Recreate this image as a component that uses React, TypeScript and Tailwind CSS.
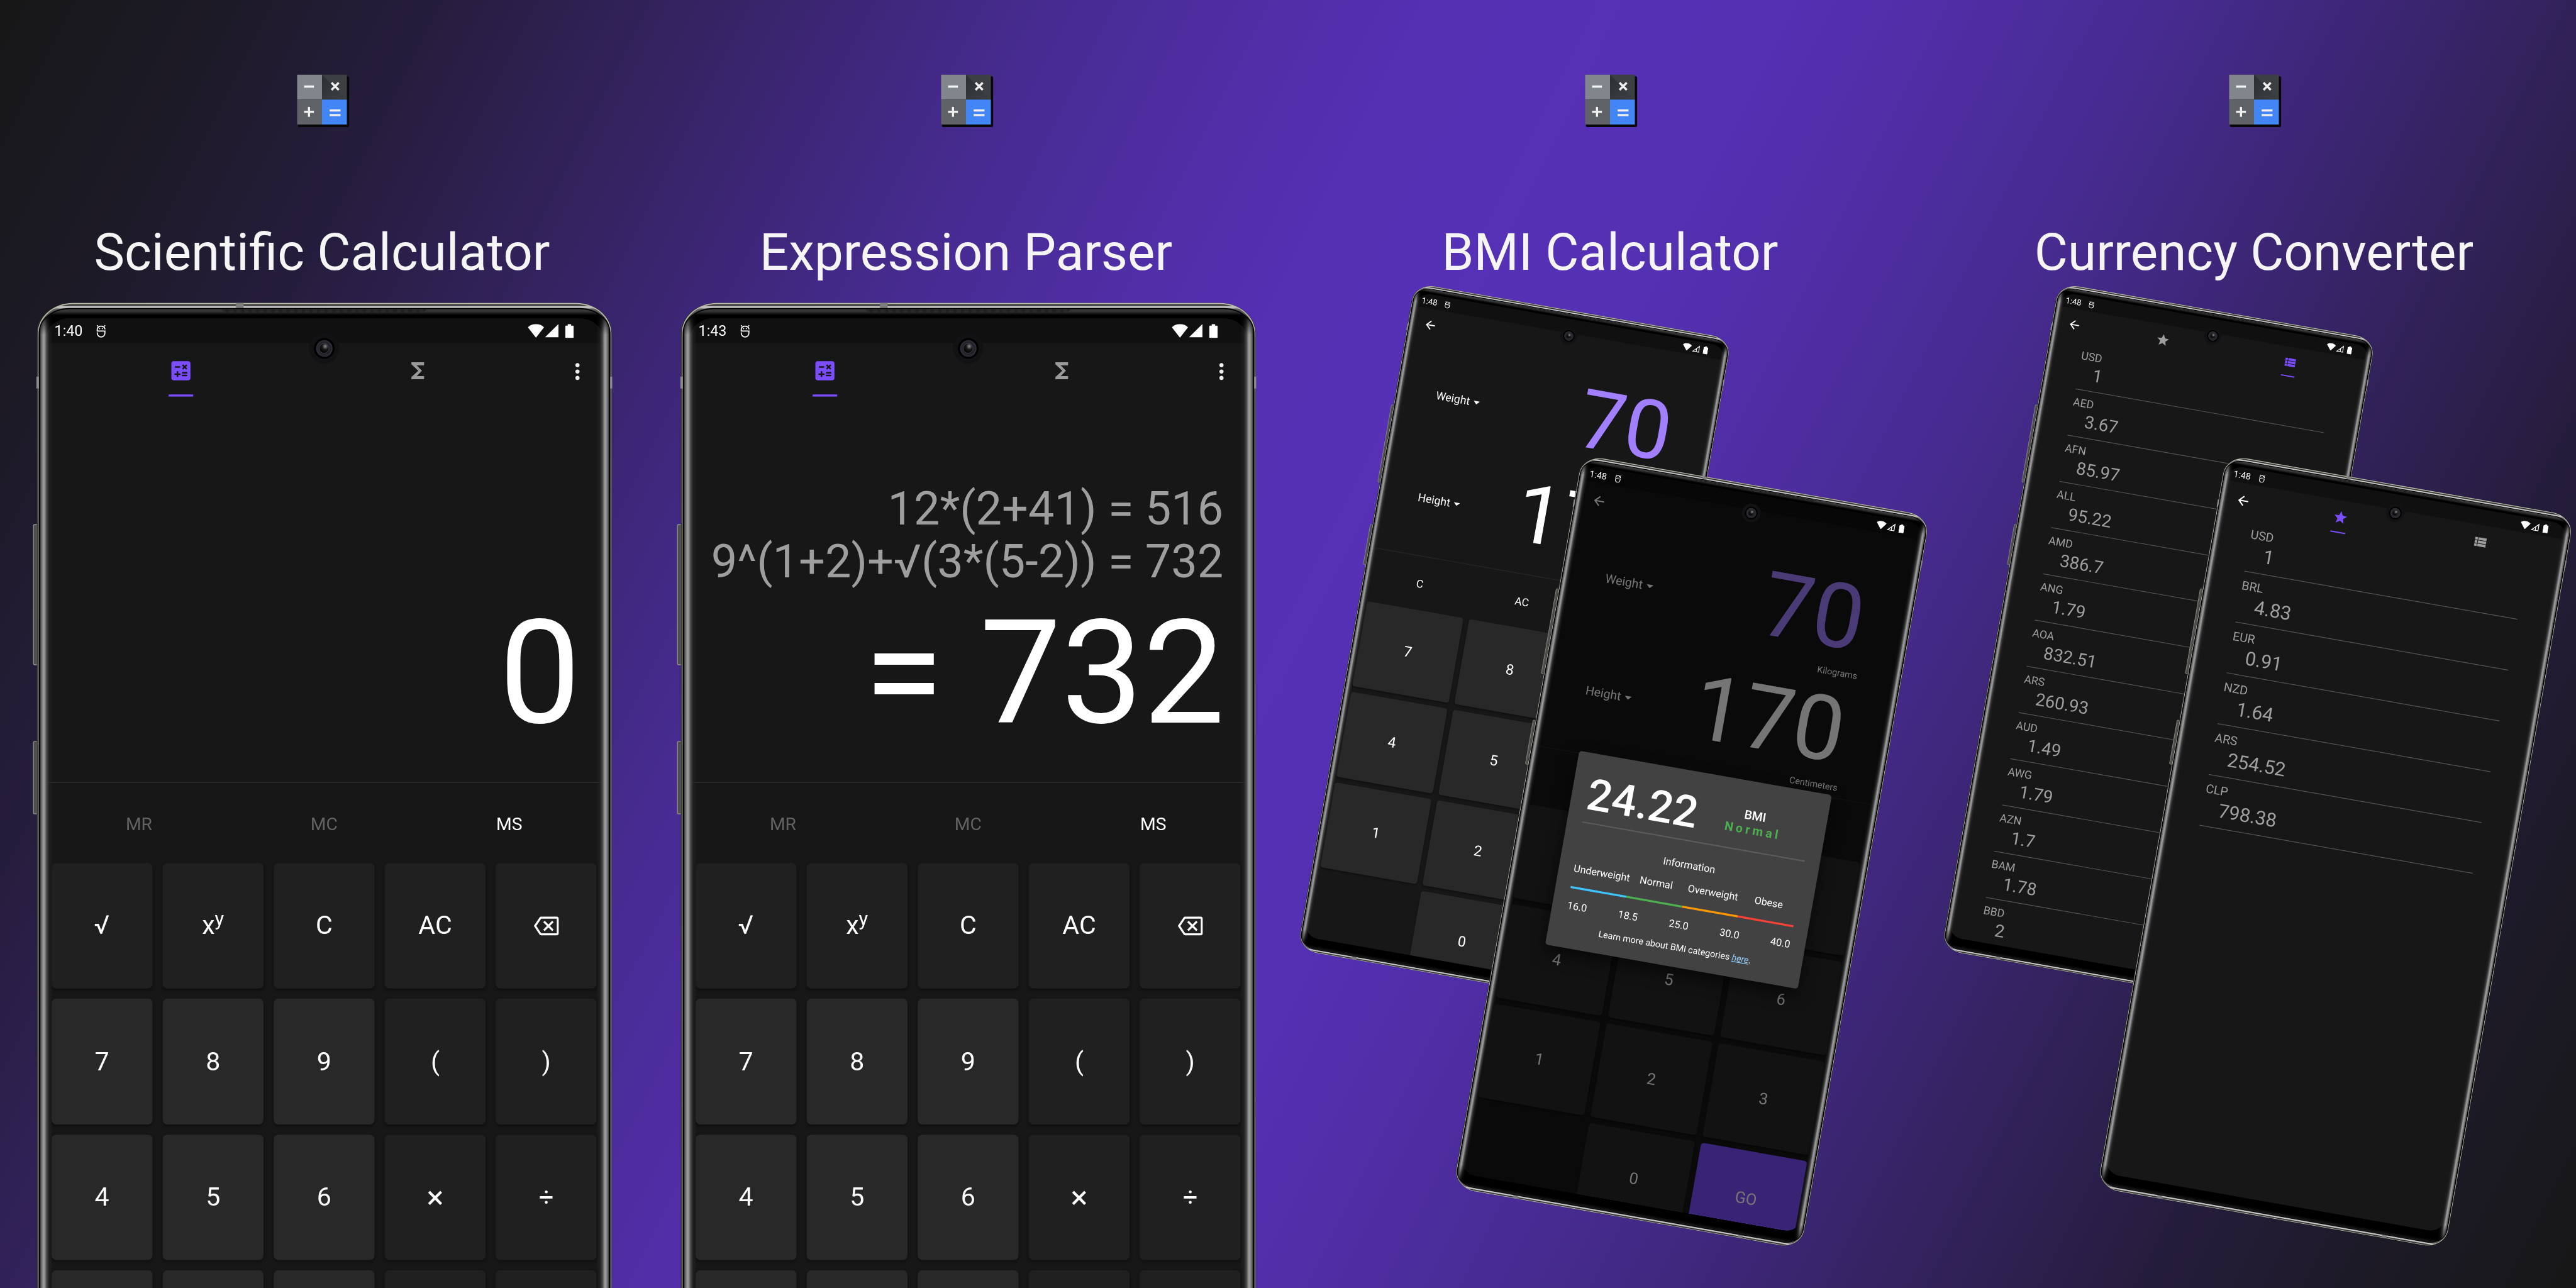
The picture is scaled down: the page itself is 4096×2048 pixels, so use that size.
import type { ReactNode } from 'react';
import {
  MdArrowBack,
  MdArrowDropDown,
  MdCalculate,
  MdFunctions,
  MdMoreVert,
  MdOutlineBackspace,
  MdStar,
  MdViewList,
} from 'react-icons/md';

/* ---------- App logo ---------- */

function Logo() {
  return (
    <div className="relative h-[118px] w-[118px]">
      <div className="absolute left-[2px] top-[4px] h-[120px] w-[121px] rounded-[4px] bg-[#080808]" />
      <svg viewBox="0 0 118 118" className="relative h-[118px] w-[118px]">
        <defs>
          <linearGradient id="fold" x1="0" y1="0" x2="1" y2="1">
            <stop offset="0" stopColor="#2c3032" />
            <stop offset="1" stopColor="#3c4043" />
          </linearGradient>
        </defs>
        <rect width="59" height="59" fill="#80868b" />
        <rect x="59" width="59" height="59" fill="#3c4043" />
        <path d="M59 0L118 59H59Z" fill="#3c4043" />
        <path d="M59 0L118 59H59Z" fill="url(#fold)" />
        <rect y="59" width="59" height="59" fill="#5f6368" />
        <rect x="59" y="59" width="59" height="59" fill="#4285f4" />
        <g fill="#f1f1f1">
          <rect x="16.7" y="25.7" width="23.3" height="5.3" />
          <rect x="16.7" y="85.5" width="23.3" height="5" />
          <rect x="25.8" y="76.4" width="5" height="23.3" />
          <rect x="77" y="82.2" width="25.7" height="5" />
          <rect x="77" y="93.2" width="25.7" height="5" />
        </g>
        <path d="M81.5 19.2L98.5 36.2M98.5 19.2L81.5 36.2" stroke="#f1f1f1" strokeWidth="5.2" />
      </svg>
    </div>
  );
}

/* ---------- Status bar ---------- */

function MaskIcon() {
  return (
    <svg viewBox="0 0 23 31" className="h-[31px] w-[23px]" fill="none" stroke="#fff" strokeWidth="2.6">
      <path d="M20.6 11.5V10A9.2 8 0 0 0 2.6 10V15.4H20.6V20.5A9 8.8 0 0 1 2.6 20.5V18.6" />
      <path d="M3.6 4.6L2.4 1.4M19.6 4.6L20.8 1.4" strokeWidth="2.4" />
      <circle cx="8" cy="9.6" r="1.5" fill="#fff" stroke="none" />
      <circle cx="14.6" cy="9.6" r="1.5" fill="#fff" stroke="none" />
    </svg>
  );
}

function StatusBar({ time, weakSignal }: { time: string; weakSignal?: boolean }) {
  return (
    <div className="flex h-[59px] shrink-0 items-center bg-[#101010] pl-[19px] pr-[67px] pt-[1px] text-white">
      <span className="relative z-20 w-[98px] text-[34.5px] leading-[58px]">{time}</span>
      <span className="relative z-20">
        <MaskIcon />
      </span>
      <span className="relative z-20 ml-auto flex items-center">
        <svg viewBox="0 0 38 32" className="h-[32px] w-[38px]" fill="#fff">
          <path d="M0 7.5C10-2.5 28-2.5 38 7.5L19 32Z" />
        </svg>
        <svg viewBox="0 0 34 32" className="ml-[2px] h-[32px] w-[34px]">
          {weakSignal ? (
            <path d="M30.5 4.5V29.5H5.5Z M20 14V29" fill="none" stroke="#fff" strokeWidth="3" />
          ) : (
            <path d="M32 0V31H0.500Z" fill="#fff" />
          )}
        </svg>
        <svg viewBox="0 0 20 33" className="ml-[14px] h-[33px] w-[20px]" fill="#fff">
          <path d="M6 0H14V3.500H18Q20 3.500 20 5.500V31Q20 33 18 33H2Q0 33 0 31V5.500Q0 3.500 2 3.500H6Z" />
        </svg>
      </span>
    </div>
  );
}

/* ---------- Device frame ---------- */

function Phone({ children }: { children: ReactNode }) {
  return (
    <div className="relative h-[2855px] w-[1357px]">
      {/* hardware keys */}
      <div className="absolute left-[-9px] top-[522px] h-[333px] w-[11px] rounded-l-[4px] border-2 border-[#8f8f8a] bg-[#4f4f4f]" />
      <div className="absolute left-[-9px] top-[1034px] h-[173px] w-[11px] rounded-l-[4px] border-2 border-[#8f8f8a] bg-[#4f4f4f]" />
      {/* outer rim */}
      <div className="absolute inset-0 rounded-[84px/72px] bg-[#2c2c2a]" />
      <div className="absolute inset-x-[1.5px] inset-y-0 rounded-[83px/72px] bg-[#babaa9]" />
      {/* metal band */}
      <div className="absolute inset-x-[3.5px] inset-y-[2.5px] rounded-[80px/70px] bg-[linear-gradient(180deg,#2a2a2a_0px,#3a3a3a_3px,#d4d4d4_6px,#c0c0c0_8px,#5a5a5a_12px,#4a4a4a_30px,#1a1a1a_55px,#000_80px,#000_2770px,#1a1a1a_2795px,#4a4a4a_2820px,#5a5a5a_2838px,#c0c0c0_2842px,#d4d4d4_2844px,#3a3a3a_2847px,#2a2a2a_2850px)]" />
      {/* antenna breaks */}
      <div className="absolute left-[470px] top-0 h-[13px] w-[18px] bg-[#7d7d7d]" />
      <div className="absolute bottom-0 left-[234px] h-[13px] w-[18px] bg-[#7d7d7d]" />
      <div className="absolute bottom-0 left-[1110px] h-[13px] w-[18px] bg-[#7d7d7d]" />
      <div className="absolute left-[-1px] top-[174px] h-[28px] w-[7px] bg-[#8a8a8a]" />
      <div className="absolute right-[-1px] top-[174px] h-[28px] w-[7px] bg-[#8a8a8a]" />
      {/* glass */}
      <div className="absolute inset-x-[4.5px] inset-y-[12px] rounded-[70px/58px] bg-black" />
      <div className="absolute inset-x-[6.5px] bottom-[14px] top-[15px] overflow-hidden rounded-[68px/54px] bg-[linear-gradient(180deg,#6a6a6a_0px,#3a3a3a_1px,#343434_5px,#000_14px,#000_2812px,#1c1c1c_2826px)]">
        <div className="absolute left-[428px] top-0 h-[8px] w-[486px] bg-[repeating-linear-gradient(90deg,#2b2b2b_0px_10px,#232323_10px_18px)] [clip-path:polygon(0_0,100%_0,98%_100%,2%_100%)]" />
        {/* display */}
        <div className="absolute left-[16px] top-[21px] flex h-[2760px] w-[1311px] flex-col overflow-hidden rounded-[56px/44px] bg-[#171717]">
          {children}
        </div>
        {/* curved edge highlights */}
        <div className="absolute inset-y-0 left-0 z-40 w-[30px] bg-[linear-gradient(90deg,#2c2c2c_0px,#6e6e6e_4px,#9f9f9f_9px,#8a8a8a_12px,rgba(80,80,80,0.9)_16px,rgba(40,40,40,0.6)_22px,rgba(20,20,20,0)_30px)] [mask-image:linear-gradient(180deg,transparent_6px,#000_60px,#000_2750px,transparent_2820px)]" />
        <div className="absolute inset-y-0 right-0 z-40 w-[30px] bg-[linear-gradient(270deg,#2c2c2c_0px,#6e6e6e_4px,#9f9f9f_9px,#8a8a8a_12px,rgba(80,80,80,0.9)_16px,rgba(40,40,40,0.6)_22px,rgba(20,20,20,0)_30px)] [mask-image:linear-gradient(180deg,transparent_6px,#000_60px,#000_2750px,transparent_2820px)]" />
      </div>
      {/* front camera */}
      <div className="absolute left-[642px] top-[71px] z-20 flex h-[72px] w-[72px] items-center justify-center rounded-full bg-[#121214]">
        <div className="flex h-[49px] w-[49px] items-center justify-center rounded-full bg-black">
          <div className="flex h-[39px] w-[39px] items-center justify-center rounded-full bg-[radial-gradient(circle,#1c1a22_40%,#45424f_100%)]">
            <div className="h-[24px] w-[24px] rounded-full border border-[#5a5a5a] bg-[radial-gradient(circle_at_62%_30%,#8d8d8d_0%,#1a1a1a_35%,#000_75%)]" />
          </div>
        </div>
      </div>
    </div>
  );
}

/* ---------- Calculator screen ---------- */

const calcRows: { label: ReactNode; digit?: boolean }[] = [
  { label: '√' },
  {
    label: (
      <span>
        x<span className="align-[20px] text-[46px] leading-none">y</span>
      </span>
    ),
  },
  { label: 'C' },
  { label: 'AC' },
  { label: <MdOutlineBackspace className="h-[59px] w-[59px]" /> },
  { label: '7', digit: true },
  { label: '8', digit: true },
  { label: '9', digit: true },
  { label: '(' },
  { label: ')' },
  { label: '4', digit: true },
  { label: '5', digit: true },
  { label: '6', digit: true },
  { label: <span className="text-[75px]">×</span> },
  { label: '÷' },
  { label: '', digit: true },
  { label: '', digit: true },
  { label: '', digit: true },
  { label: '' },
  { label: '' },
];

function CalculatorScreen({ time, history, result }: { time: string; history: string[]; result: string }) {
  return (
    <>
      <StatusBar time={time} />
      <div className="flex h-[126px] shrink-0 pl-[38px]">
        <div className="relative flex w-[559px] shrink-0 items-center justify-center pt-[4px] text-[#7c4dff]">
          <MdCalculate className="h-[60px] w-[60px]" />
          <div className="absolute bottom-0 left-1/2 h-[5px] w-[58px] -translate-x-1/2 bg-[#7c4dff]" />
        </div>
        <div className="flex w-[559px] shrink-0 items-center justify-center pt-[4px] text-[#9a9a9a]">
          <MdFunctions className="h-[60px] w-[60px]" />
        </div>
        <div className="flex w-[154px] shrink-0 items-center pl-[67px] pt-[7px] text-[#eeeeee]">
          <MdMoreVert className="h-[60px] w-[60px] shrink-0" />
        </div>
      </div>
      <div className="flex h-[912px] shrink-0 flex-col items-end justify-end border-b-[3px] border-[#282828] pb-[56px] pr-[50px]">
        {history.map((line) => (
          <div key={line} className="mr-[3px] whitespace-nowrap text-[109.6px] leading-[124px] text-[#9e9e9e]">
            {line}
          </div>
        ))}
        <div className="whitespace-nowrap text-[343px] leading-[402px] text-white">{result}</div>
      </div>
      <div className="grid h-[189px] shrink-0 grid-cols-3 items-center pt-[3px] text-center text-[42px] text-[#616161]">
        <span>MR</span>
        <span>MC</span>
        <span className="text-white">MS</span>
      </div>
      <div className="grid shrink-0 grid-cols-5 gap-[24px] px-[12px] text-[61px] text-white">
        {calcRows.map((key, i) => (
          <div
            key={i}
            className={
              key.digit
                ? 'flex h-[296.3px] items-center justify-center rounded-[11px] bg-[#282828] shadow-[0_5px_8px_rgba(0,0,0,0.3)]'
                : 'flex h-[296.3px] items-center justify-center rounded-[11px] bg-[#202020] shadow-[0_5px_8px_rgba(0,0,0,0.3)]'
            }
          >
            {key.label}
          </div>
        ))}
      </div>
    </>
  );
}

/* ---------- BMI screen ---------- */

function Measure({ label, value, unit, active }: { label: string; value: string; unit: string; active?: boolean }) {
  return (
    <div className="flex h-[436px] shrink-0 justify-between pl-[148px] pr-[146px] text-white">
      <div className="mt-[170px] flex h-[50px] items-center text-[47px] leading-[50px]">
        {label}
        <MdArrowDropDown className="ml-[-4px] h-[64px] w-[64px]" />
      </div>
      <div className="flex flex-col items-end pt-[33px]">
        <div
          className={
            active
              ? 'mr-[14px] text-[346px] leading-[300px] text-[#a17fff]'
              : 'mr-[14px] text-[346px] leading-[300px] text-white'
          }
        >
          {value}
        </div>
        <div className="mt-[46px] text-[34.5px] leading-[37px]">{unit}</div>
      </div>
    </div>
  );
}

function BmiDialog() {
  return (
    <div className="absolute left-[164px] top-[1084px] z-30 flex h-[755px] w-[984px] flex-col rounded-[11px] bg-[#424242] px-[58px] pt-[59px] text-white shadow-[0_28px_60px_rgba(0,0,0,0.55)]">
      <div className="grid h-[197px] grid-cols-2 items-center text-center">
        <div className="text-[168px] font-medium leading-[197px]">24.22</div>
        <div className="text-[47px] leading-[56px]">
          <div className="font-medium">BMI</div>
          <div className="font-bold tracking-[10.5px] text-[#4caf50]">Normal</div>
        </div>
      </div>
      <div className="mt-[9px] h-[5px] bg-[#5c5c5c]" />
      <div className="mt-[68px] text-center text-[39px] leading-[44px]">Information</div>
      <div className="mt-[44px] grid grid-cols-4 text-center text-[39px] leading-[44px]">
        <span>Underweight</span>
        <span className="pr-[8px]">Normal</span>
        <span>Overweight</span>
        <span>Obese</span>
      </div>
      <div className="mt-[47px] grid h-[8px] grid-cols-4">
        <div className="bg-[#40c4ff]" />
        <div className="bg-[#4caf50]" />
        <div className="bg-[#ff9800]" />
        <div className="bg-[#f44336]" />
      </div>
      <div className="mt-[45px] flex justify-between text-[39px] leading-[44px]">
        <span>16.0</span>
        <span>18.5</span>
        <span>25.0</span>
        <span>30.0</span>
        <span>40.0</span>
      </div>
      <div className="mt-[45px] whitespace-nowrap text-center text-[34.5px] leading-[40px]">
        Learn more about BMI categories <span className="text-[#90caf9] italic underline">here</span>.
      </div>
    </div>
  );
}

const bmiKeys = ['7', '8', '9', '4', '5', '6', '1', '2', '3', '', '0', 'GO'];

function BmiScreen({ dialog }: { dialog?: boolean }) {
  return (
    <>
      <StatusBar time="1:48" weakSignal />
      <div className="flex h-[161px] shrink-0 pl-[43px] pt-[39px] text-white">
        <MdArrowBack className="h-[59px] w-[59px]" />
      </div>
      <Measure label="Weight" value="70" unit="Kilograms" active />
      <Measure label="Height" value="170" unit="Centimeters" />
      <div className="grid h-[228px] shrink-0 grid-cols-3 border-t-[3px] border-[#282828] pt-[88px] text-center text-[46px] leading-[54px] text-white">
        <span>C</span>
        <span>AC</span>
      </div>
      <div className="grid shrink-0 grid-cols-3 gap-[24px] px-[12px] text-[61px] text-white">
        {bmiKeys.map((key, i) => (
          <div
            key={i}
            className={
              key === ''
                ? 'h-[364px]'
                : key === 'GO'
                  ? 'flex h-[364px] items-center justify-center rounded-[11px] bg-[#7c4dff]'
                  : 'flex h-[364px] items-center justify-center rounded-[11px] bg-[#282828] shadow-[0_5px_8px_rgba(0,0,0,0.35)]'
            }
          >
            {key}
          </div>
        ))}
      </div>
      {dialog && <div className="absolute inset-0 z-10 bg-black/54" />}
      {dialog && <BmiDialog />}
    </>
  );
}

/* ---------- Currency screen ---------- */

type Rate = [code: string, value: string];

const allRates: Rate[] = [
  ['USD', '1'],
  ['AED', '3.67'],
  ['AFN', '85.97'],
  ['ALL', '95.22'],
  ['AMD', '386.7'],
  ['ANG', '1.79'],
  ['AOA', '832.51'],
  ['ARS', '260.93'],
  ['AUD', '1.49'],
  ['AWG', '1.79'],
  ['AZN', '1.7'],
  ['BAM', '1.78'],
  ['BBD', '2'],
];

const favouriteRates: Rate[] = [
  ['USD', '1'],
  ['BRL', '4.83'],
  ['EUR', '0.91'],
  ['NZD', '1.64'],
  ['ARS', '254.52'],
  ['CLP', '798.38'],
];

function TabSlot({ active, children }: { active: boolean; children: ReactNode }) {
  return (
    <div
      className={
        active
          ? 'relative flex w-[545px] items-center justify-center pt-[4px] text-[#7c4dff]'
          : 'relative flex w-[545px] items-center justify-center pt-[4px] text-[#9e9e9e]'
      }
    >
      {children}
      {active && <div className="absolute bottom-0 left-1/2 h-[5px] w-[58px] -translate-x-1/2 bg-[#7c4dff]" />}
    </div>
  );
}

function CurrencyScreen({ rates, tab }: { rates: Rate[]; tab: 'favourites' | 'all' }) {
  return (
    <>
      <StatusBar time="1:48" weakSignal />
      <div className="flex h-[126px] shrink-0 items-stretch">
        <div className="flex w-[179px] items-center pl-[43px] pt-[8px] text-white">
          <MdArrowBack className="h-[59px] w-[59px]" />
        </div>
        <TabSlot active={tab === 'favourites'}>
          <MdStar className="h-[59px] w-[59px]" />
        </TabSlot>
        <TabSlot active={tab === 'all'}>
          <MdViewList className="h-[59px] w-[59px]" />
        </TabSlot>
      </div>
      <div className="ml-[124px] mr-[123px] mt-[10px] flex flex-col">
        {rates.map(([code, value]) => (
          <div key={code} className="h-[198px] shrink-0 border-b-[3px] border-[#555555] pt-[28px] text-[#9e9e9e]">
            <div className="text-[47px] leading-[50px]">{code}</div>
            <div className="mt-[11px] pl-[62px] text-[73.5px] leading-[80px]">{value}</div>
          </div>
        ))}
      </div>
    </>
  );
}

/* ---------- Page ---------- */

function Column({ title, children }: { title: string; children: ReactNode }) {
  return (
    <section className="relative flex h-[3040px] w-[1520px] shrink-0 flex-col items-center pt-[176px]">
      <Logo />
      <h2 className="mt-[231px] whitespace-nowrap text-[121.4px] leading-[142px] text-[#f5f5f5]">{title}</h2>
      {children}
    </section>
  );
}

function PhonePair({ back, front }: { back: ReactNode; front: ReactNode }) {
  return (
    <>
      <div className="absolute left-[-144px] top-[93px] rotate-[10deg] scale-[0.5595]">
        <Phone>{back}</Phone>
      </div>
      <div className="absolute left-[273.5px] top-[583px] rotate-[10deg] scale-[0.615]">
        <Phone>{front}</Phone>
      </div>
    </>
  );
}

export default function App() {
  return (
    <div className="h-[2048px] w-[4096px] overflow-hidden bg-[#171717] font-['Roboto',sans-serif]">
      <main className="flex h-[3040px] w-[6080px] origin-top-left scale-[0.673684] overflow-hidden bg-[linear-gradient(116.565deg,#171717_0%,#1d1a27_7%,#261d3e_13.8%,#32225b_20.3%,#3c2675_26%,#472b90_32.6%,#502ea6_39.5%,#5430b2_44.3%,#5631b6_50%,#5430b2_55.7%,#502ea6_60.5%,#472b90_67.4%,#3c2675_74%,#32225b_79.7%,#261d3e_86.2%,#1d1a27_93%,#171717_100%)]">
        <Column title="Scientific Calculator">
          <div className="ml-[11px] mt-[48px]">
            <Phone>
              <CalculatorScreen time="1:40" history={[]} result="0" />
            </Phone>
          </div>
        </Column>
        <Column title="Expression Parser">
          <div className="ml-[11px] mt-[48px]">
            <Phone>
              <CalculatorScreen
                time="1:43"
                history={['12*(2+41) = 516', '9^(1+2)+√(3*(5-2)) = 732']}
                result="= 732"
              />
            </Phone>
          </div>
        </Column>
        <Column title="BMI Calculator">
          <PhonePair back={<BmiScreen />} front={<BmiScreen dialog />} />
        </Column>
        <Column title="Currency Converter">
          <PhonePair
            back={<CurrencyScreen rates={allRates} tab="all" />}
            front={<CurrencyScreen rates={favouriteRates} tab="favourites" />}
          />
        </Column>
      </main>
    </div>
  );
}
